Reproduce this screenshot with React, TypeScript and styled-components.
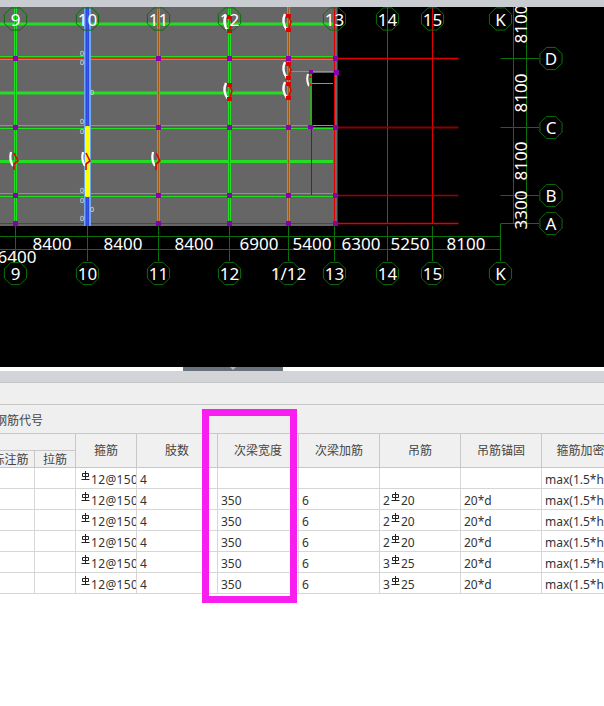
import React from 'react';
import styled, { createGlobalStyle } from 'styled-components';

const GlobalStyle = createGlobalStyle`
  html, body {
    margin: 0;
    background: #fff;
    overflow: hidden;
  }
`;

const Page = styled.div`
  width: 604px;
  height: 706px;
  overflow: hidden;
  position: relative;
  font-family: "Noto Sans", "Noto Sans CJK SC", sans-serif;
  font-size: 12px;
  color: #333;
`;

const TopStrip = styled.div`
  height: 7px;
  background: #c9cdd1;
`;

const Canvas = styled.svg`
  display: block;
  width: 604px;
  height: 360px;
  background: #000;
`;

const Splitter = styled.div`
  height: 4px;
  display: flex;
  padding-left: 183px;
`;

const SplitterHandle = styled.div`
  width: 100px;
  flex: none;
  background: #6a737c;
  display: flex;
  justify-content: center;

  &::after {
    content: '';
    border: 3px solid transparent;
    border-top-color: #b4b8bc;
    border-bottom: 0;
  }
`;

const TabStrip = styled.div`
  height: 11px;
  background: #d2d4d8;
  border-bottom: 1px solid #c4c6c8;
`;

const ButtonStrip = styled.div`
  height: 21px;
  background: #efefef;
  border-bottom: 1px solid #c8c8c8;
`;

const FilterBar = styled.div`
  height: 28px;
  background: #efefef;
  line-height: 32px;
  color: #444;
  white-space: nowrap;
  overflow: hidden;

  span {
    margin-left: -5px;
    display: inline-block;
  }
`;

const GridFrame = styled.div`
  overflow: hidden;
  width: 604px;
`;

const Grid = styled.table`
  table-layout: fixed;
  border-collapse: separate;
  border-spacing: 0;
  margin-left: -13px;
  width: 657px;
  border-top: 1px solid #c8c8c8;
`;

const Col = styled.col<{ $w: number }>`
  width: ${(p) => p.$w}px;
`;

const HeadRow = styled.tr`
  height: 17px;
`;

const BodyRow = styled.tr`
  height: 21px;
`;

const HeadCell = styled.th<{ $low?: boolean }>`
  background: #f0f0f0;
  font-weight: 400;
  color: #444;
  font-size: 12px;
  line-height: 14px;
  padding: ${(p) => (p.$low ? '2px 0 0' : '0')};
  text-align: center;
  box-sizing: border-box;
  border-right: 1px solid #c8c8c8;
  border-bottom: 1px solid #c8c8c8;
  white-space: nowrap;
  overflow: hidden;
`;

const Cell = styled.td<{ $inset?: number }>`
  height: 21px;
  padding: 3px 0 0 ${(p) => p.$inset ?? 3}px;
  box-sizing: border-box;
  border-right: 1px solid #d6d6d6;
  border-bottom: 1px solid #d6d6d6;
  white-space: nowrap;
  overflow: hidden;
  line-height: 17px;
  color: #333;
`;

const StirrupText = styled.span`
  letter-spacing: 0.35px;
`;

const BarMark = styled.svg`
  width: 9px;
  height: 10px;
  vertical-align: 3px;
  margin: 0 1px;
`;

const Highlight = styled.div`
  position: absolute;
  left: 202px;
  top: 409px;
  width: 95px;
  height: 194px;
  box-sizing: border-box;
  border: 7px solid #f81ef0;
`;

const BubbleLabel = styled.text`
  fill: #fff;
  font-family: "Noto Sans", sans-serif;
  font-size: 17px;
  text-anchor: middle;
  dominant-baseline: central;
`;

const TinyLabel = styled.text`
  fill: #ddd;
  font-family: "DejaVu Sans", sans-serif;
  font-size: 7px;
  text-anchor: middle;
  dominant-baseline: central;
`;

const GREEN = '#22dd22';
const LINE = '#0a700a';
const RED = '#e00000';

const AXES: [string, number][] = [
  ['9', 15.5],
  ['10', 87.5],
  ['11', 158.5],
  ['12', 229.5],
  ['13', 334.5],
  ['14', 387.5],
  ['15', 432.5],
  ['K', 500.5],
];
const ROWS: [string, number][] = [
  ['D', 58.5],
  ['C', 127.5],
  ['B', 195.5],
  ['A', 223.5],
];
const BEAM_ROWS = [24, 93, 161.5];
const BEAM_COLS = [15.5, 158.5, 229.5, 288.5];
const JOINT_COLS = [15.5, 158.5, 229.5, 288.5, 335.5];
// right of the slab the row lines differ in weight and colour
const ROW_TAILS: [number, string, number][] = [
  [58.5, RED, 1.4],
  [127.5, '#8a0000', 2],
  [195.5, '#a00000', 1.5],
  [223.5, RED, 1.4],
];
const BOTTOM_DIMS: [string, number, number][] = [
  ['8400', 52, 243],
  ['8400', 123, 243],
  ['8400', 194, 243],
  ['6900', 259, 243],
  ['5400', 312, 243],
  ['6300', 361, 243],
  ['5250', 410, 243],
  ['8100', 466, 243],
  ['6400', 17, 256],
];
const SIDE_DIMS: [string, number][] = [
  ['8100', 24],
  ['8100', 93],
  ['8100', 161],
  ['3300', 210],
];
const ZEROS: [number, number][] = [
  [82, 54],
  [82, 63],
  [92, 93],
  [82, 122],
  [82, 132],
  [82, 191],
  [82, 201],
  [92, 210],
  [82, 219],
];

const Bubble = ({ x, y, label }: { x: number; y: number; label: string }) => {
  const points = Array.from({ length: 8 }, (_, i) => {
    const a = ((i + 0.5) * Math.PI) / 4;
    return `${x + 12 * Math.cos(a)},${y + 12 * Math.sin(a)}`;
  }).join(' ');
  return (
    <>
      <polygon points={points} fill="none" stroke={LINE} />
      <BubbleLabel x={x} y={y}>
        {label}
      </BubbleLabel>
    </>
  );
};

const CurvedHook = ({ x, y }: { x: number; y: number }) => (
  <>
    <path d={`M${x - 4} ${y - 9} Q${x - 6} ${y - 1} ${x - 2} ${y + 5}`} stroke="#fff" strokeWidth="2.2" fill="none" />
    <path d={`M${x - 1} ${y - 8} L${x + 3} ${y} L${x - 1} ${y + 3} L${x - 1} ${y + 9}`} stroke={RED} strokeWidth="1.6" fill="none" />
  </>
);

const BlockHook = ({ x, y }: { x: number; y: number }) => (
  <>
    <path d={`M${x - 3} ${y - 9} Q${x - 7} ${y - 1} ${x - 1} ${y + 7}`} stroke="#fff" strokeWidth="2.4" fill="none" />
    <rect x={x - 2} y={y - 9} width="5" height="4" fill={RED} />
    <rect x={x - 2} y={y + 5} width="5" height="4" fill={RED} />
    <path d={`M${x + 1} ${y - 6} L${x + 3} ${y - 1} L${x + 1} ${y + 5}`} stroke={RED} strokeWidth="1.5" fill="none" />
  </>
);

const CadDrawing = () => (
  <Canvas viewBox="0 7 604 360">
    <rect x="0" y="7" width="337.5" height="219" fill="#666" />
    <rect x="311" y="73" width="23" height="54" fill="#000" />

    {/* framing beams */}
    {BEAM_ROWS.map((y) => (
      <line key={y} x1="0" x2={y === 93 ? 284 : 333} y1={y} y2={y} stroke={GREEN} strokeWidth="3" />
    ))}
    <path d="M288 71.5H333M311 83.5H333" stroke={GREEN} />
    {ROWS.slice(0, 3).map(([, y]) => (
      <g key={y}>
        <line x1="0" x2="333" y1={y - 2} y2={y - 2} stroke={GREEN} />
        <line x1="0" x2="333" y1={y + 1} y2={y + 1} stroke={GREEN} />
        <line x1="0" x2="333" y1={y} y2={y} stroke="#d03010" />
      </g>
    ))}
    <line x1="0" x2="337" y1="223.5" y2="223.5" stroke="#d01010" />
    {BEAM_COLS.map((x) => (
      <g key={x}>
        <line x1={x - 1} x2={x - 1} y1="7" y2="225" stroke={GREEN} />
        <line x1={x + 1} x2={x + 1} y1="7" y2="225" stroke={GREEN} />
        <line x1={x} x2={x} y1="7" y2="225" stroke="#a85a10" />
      </g>
    ))}
    <line x1="311" x2="311" y1="72" y2="127" stroke="#3aa02a" strokeWidth="2" />
    <line x1="311.5" x2="311.5" y1="127" y2="195" stroke="#8a1010" />

    {/* highlighted column on axis 10 */}
    <rect x="84" y="7" width="7" height="219" fill="#6fa8f0" />
    <rect x="85.5" y="7" width="3.5" height="219" fill="#3048dc" />
    <rect x="85" y="126" width="5" height="71" rx="1.5" fill="#ffff00" />
    <line x1="87.5" x2="87.5" y1="7" y2="126" stroke="#d0206a" />
    <line x1="87.5" x2="87.5" y1="197" y2="226" stroke="#d0206a" />
    {ZEROS.map(([x, y]) => (
      <TinyLabel key={`${x}-${y}`} x={x} y={y}>
        0
      </TinyLabel>
    ))}

    {/* axes to the right of the slab */}
    <line x1="334.5" x2="334.5" y1="7" y2="226" stroke={RED} />
    <line x1="387.5" x2="387.5" y1="7" y2="224" stroke="#c81818" />
    <line x1="432.5" x2="432.5" y1="7" y2="224" stroke={RED} />
    {ROW_TAILS.map(([y, color, weight]) => (
      <line key={y} x1="337" x2="458.5" y1={y} y2={y} stroke={color} strokeWidth={weight} />
    ))}

    {/* joints */}
    {JOINT_COLS.map((x) =>
      ROWS.map(([, y]) => <rect key={`${x}-${y}`} x={x - 2.5} y={y - 2.5} width="5" height="5" fill="#8a00b0" />),
    )}
    <rect x="334" y="70" width="5" height="5" fill="#8a00b0" />
    <rect x="308" y="125" width="5" height="4" fill="#8a00b0" />
    <rect x="309" y="70" width="4" height="4" fill="#8a00b0" />

    {/* rebar annotation marks */}
    <CurvedHook x={15} y={161} />
    <CurvedHook x={87} y={161} />
    <CurvedHook x={157} y={161} />
    <BlockHook x={229} y={24} />
    <BlockHook x={229} y={92} />
    <BlockHook x={288} y={23} />
    <BlockHook x={288} y={71} />
    <BlockHook x={288} y={91} />
    <path d="M308 74Q306 80 309 86" stroke="#fff" strokeWidth="2" fill="none" />
    <path d="M310.5 76v2M310.5 84v2" stroke={RED} strokeWidth="2" />

    {/* bottom dimensions */}
    <path d="M0 236.5H500.5M0 249.5H500.5" stroke={LINE} />
    {[...AXES.map(([, x]) => x), 288.5].map((x) => (
      <line key={x} x1={x} x2={x} y1="226" y2="261" stroke={LINE} />
    ))}
    {BOTTOM_DIMS.map(([label, x, y]) => (
      <BubbleLabel key={`${x}-${y}`} x={x} y={y}>
        {label}
      </BubbleLabel>
    ))}
    {AXES.map(([label, x]) => (
      <Bubble key={`top-${label}`} x={x} y={19} label={label} />
    ))}
    {AXES.map(([label, x]) => (
      <Bubble key={`bottom-${label}`} x={x} y={273.5} label={label} />
    ))}
    <Bubble x={288.5} y={273.5} label="1/12" />

    {/* side dimensions */}
    <path d="M513.5 7V224M526.5 7V224M500.5 224V236" stroke={LINE} />
    {ROWS.map(([label, y]) => (
      <g key={label}>
        <line x1="500.5" x2="539" y1={y} y2={y} stroke={LINE} />
        <Bubble x={551} y={y} label={label} />
      </g>
    ))}
    {SIDE_DIMS.map(([label, y]) => (
      <BubbleLabel key={y} x={520} y={y} transform={`rotate(-90 520 ${y})`}>
        {label}
      </BubbleLabel>
    ))}
  </Canvas>
);

const Steel = () => (
  <BarMark viewBox="0 0 9 10">
    <path d="M1.5 2.5H7.5V5.5H1.5ZM4.5 0V8.5M0.5 8.5H8.5" fill="none" stroke="#222" strokeWidth="1" />
  </BarMark>
);

const COLUMN_WIDTHS = [48, 41, 61, 81, 81, 81, 81, 81, 102];

type Row = { stirrup: string; width: string; extra: string; count?: string; size?: string; anchor: string };

const ROW_DATA: Row[] = [
  { stirrup: '12@150', width: '', extra: '', anchor: '' },
  { stirrup: '12@150', width: '350', extra: '6', count: '2', size: '20', anchor: '20*d' },
  { stirrup: '12@150', width: '350', extra: '6', count: '2', size: '20', anchor: '20*d' },
  { stirrup: '12@150', width: '350', extra: '6', count: '2', size: '20', anchor: '20*d' },
  { stirrup: '12@150', width: '350', extra: '6', count: '3', size: '25', anchor: '20*d' },
  { stirrup: '12@150', width: '350', extra: '6', count: '3', size: '25', anchor: '20*d' },
];

const ROW_HEAD = ['箍筋', '肢数', '次梁宽度', '次梁加筋', '吊筋', '吊筋锚固', '箍筋加密长度'];

export default function App() {
  return (
    <Page>
      <GlobalStyle />
      <TopStrip />
      <CadDrawing />
      <Splitter>
        <SplitterHandle />
      </Splitter>
      <TabStrip />
      <ButtonStrip />
      <FilterBar>
        <span>钢筋代号</span>
      </FilterBar>
      <GridFrame>
        <Grid>
          <colgroup>
            {COLUMN_WIDTHS.map((w, i) => (
              <Col key={i} $w={w} />
            ))}
          </colgroup>
          <thead>
            <HeadRow>
              <HeadCell colSpan={2} />
              {ROW_HEAD.map((title) => (
                <HeadCell key={title} rowSpan={2}>
                  {title}
                </HeadCell>
              ))}
            </HeadRow>
            <HeadRow>
              <HeadCell $low>标注筋</HeadCell>
              <HeadCell $low>拉筋</HeadCell>
            </HeadRow>
          </thead>
          <tbody>
            {ROW_DATA.map((row, i) => (
              <BodyRow key={i}>
                <Cell />
                <Cell />
                <Cell $inset={4}>
                  <Steel />
                  <StirrupText>{row.stirrup}</StirrupText>
                </Cell>
                <Cell>4</Cell>
                <Cell>{row.width}</Cell>
                <Cell>{row.extra}</Cell>
                <Cell>
                  {row.count && (
                    <>
                      {row.count}
                      <Steel />
                      {row.size}
                    </>
                  )}
                </Cell>
                <Cell>{row.anchor}</Cell>
                <Cell>max(1.5*h,500)</Cell>
              </BodyRow>
            ))}
          </tbody>
        </Grid>
      </GridFrame>
      <Highlight />
    </Page>
  );
}
